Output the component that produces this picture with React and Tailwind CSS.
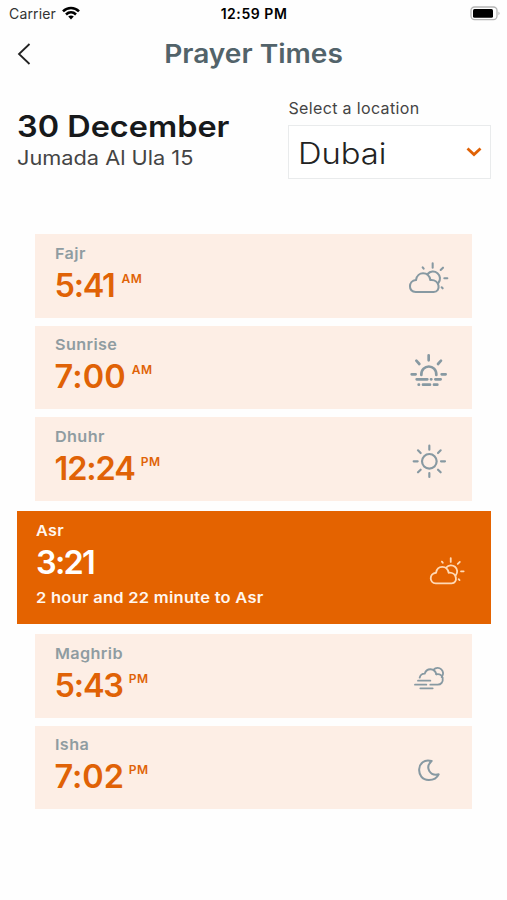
import { useState } from 'react'

function PartlyCloudyIcon({ className }) {
  return (
    <svg viewBox="54 108 126 102" className={className} fill="none" stroke="currentColor" strokeWidth="6.2" strokeLinecap="round" strokeLinejoin="round">
      <path d="M77 201C54 201 54 167 78 165C82 138 116 138 121 165C150 162 154 201 131 201Z" />
      <path d="M113 147A19 19 0 1 1 145 174" />
      <path d="M128 115V128M152 135L159 128M163 160H172M155 187L158 190M98 127L101 131" />
    </svg>
  )
}

function SunriseIcon({ className }) {
  return (
    <svg viewBox="60 384 114 102" className={className} fill="none" stroke="currentColor" strokeWidth="8" strokeLinecap="round">
      <path d="M94 450C93 416 140 416 139 450" />
      <path d="M116 391V406M79 407L88 417M153 407L144 417M65 448H77M155 448H167" />
      <path d="M80 463H112M123 463H124M136 463H152M86 479H87M99 479H120M132 479H142" />
    </svg>
  )
}

function SunIcon({ className }) {
  return (
    <svg viewBox="66 102 105 105" className={className} fill="none" stroke="currentColor" strokeWidth="6.5" strokeLinecap="round">
      <circle cx="118" cy="154" r="22" />
      <path d="M118 107V119M118 189V201M71 154H83M153 154H165M84 121L92 129M152 121L144 129M84 187L92 179M152 187L144 179" />
    </svg>
  )
}

function WindyCloudIcon({ className }) {
  return (
    <svg viewBox="69 171 99 75" className={className} fill="none" stroke="currentColor" strokeWidth="5.5" strokeLinecap="round">
      <path d="M89 206C91 198 97 194 104 194C110 176 134 176 139 196" />
      <path d="M131 182A16 16 0 1 1 155 204" />
      <path d="M139 196C150 194 157 199 158 207C160 219 153 227 143 227H121" />
      <path d="M84 215H121M75 227H109M91 238H128" />
    </svg>
  )
}

function MoonIcon({ className }) {
  return (
    <svg viewBox="81 444 72 72" className={className} fill="none" stroke="currentColor" strokeWidth="6" strokeLinejoin="round">
      <path d="M125 453C78 440 75 511 117 510C131 510 141 504 146 493C121 499 103 473 125 453Z" />
    </svg>
  )
}

const prayers = [
  { name: 'Fajr', time: '5:41', period: 'AM', icon: PartlyCloudyIcon, iconSize: 'w-[42px] h-[34px]', spacing: 'tracking-[-1.3px] mr-[7px]' },
  { name: 'Sunrise', time: '7:00', period: 'AM', icon: SunriseIcon, iconSize: 'w-[38px] h-[34px]', spacing: 'tracking-[0.1px] mr-[6px]' },
  { name: 'Dhuhr', time: '12:24', period: 'PM', icon: SunIcon, iconSize: 'w-[35px] h-[35px]', spacing: 'tracking-[-1.1px] mr-[6px]' },
  { name: 'Asr', time: '3:21', remaining: '2 hour and 22 minute to Asr', icon: PartlyCloudyIcon, iconSize: 'w-[37px] h-[30px]', spacing: 'tracking-[-1.8px]' },
  { name: 'Maghrib', time: '5:43', period: 'PM', icon: WindyCloudIcon, iconSize: 'w-[33px] h-[25px]', spacing: 'tracking-[-1.2px] mr-[6px]' },
  { name: 'Isha', time: '7:02', period: 'PM', icon: MoonIcon, iconSize: 'w-[24px] h-[24px]', spacing: 'tracking-[-0.1px] mr-[5px]' }
]

function StatusBar() {
  return (
    <div className="h-7 grid grid-cols-3 items-center pl-[9px] pr-[6px] text-black">
      <div className="flex items-center gap-[6px]">
        <span className="text-[14px] leading-7 tracking-[0.15px] text-[#333]">Carrier</span>
        <svg viewBox="0 0 18 14" className="w-[18px] h-[14px] -mt-[3px]" fill="none" stroke="currentColor" strokeWidth="2.6">
          <path d="M1 5.4C5.6 .9 12.4 .9 17 5.4" />
          <path d="M4 8.5C7 5.7 11 5.7 14 8.5" />
          <path d="M6.2 10.6C7.8 9.2 10.2 9.2 11.8 10.6L9 13.6Z" fill="currentColor" stroke="none" />
        </svg>
      </div>
      <span className="-ml-[2px] text-center text-[14px] leading-7 font-semibold tracking-[0.55px] whitespace-nowrap">12:59 PM</span>
      <svg viewBox="0 0 31 15" className="w-[31px] h-[15px] justify-self-end -mt-[2px]">
        <rect x="1" y="1" width="26" height="12.6" rx="3.5" fill="none" stroke="#b5b5b5" strokeWidth="1.3" />
        <rect x="3" y="3" width="20" height="8.8" rx="1.5" fill="#000" />
        <path d="M28.5 5.4Q30.6 7.3 28.5 9.2Z" fill="#aaa" />
      </svg>
    </div>
  )
}

function PrayerCard({ prayer, active, onSelect }) {
  const Icon = prayer.icon
  return (
    <button
      onClick={onSelect}
      className={`flex justify-between text-left ${
        active
          ? 'h-[113px] my-[2px] pl-[19.5px] pr-[22px] bg-[#e46300] text-white'
          : 'h-[83.7px] mx-[18.5px] pl-[19.5px] pr-[22px] bg-[#fdeee5] text-[#e06206]'
      }`}
    >
      <div className="pt-[9.5px] flex flex-col">
        <span className={`origin-left scale-x-[1.08] text-[15px] leading-5 font-semibold tracking-[0.35px] ${active ? 'text-[#fff6ee]' : 'text-[#8f9ca1]'}`}>
          {prayer.name}
        </span>
        <div className="flex items-start h-[44px]">
          <span className={`text-[32.5px] leading-[44px] font-semibold ${prayer.spacing}`}>{prayer.time}</span>
          {prayer.period && <span className="mt-[7px] text-[12px] leading-4 font-semibold tracking-[0.5px]">{prayer.period}</span>}
        </div>
        {prayer.remaining && (
          <span className="mt-[3px] origin-left scale-x-[1.1] text-[15px] leading-5 font-semibold tracking-[0.24px] text-[#fff6ee] whitespace-nowrap">{prayer.remaining}</span>
        )}
      </div>
      <div className={`w-[42px] h-full flex items-center justify-center ${active ? 'pt-[7px] text-[#ffd9b5]' : 'pt-[5px] text-[#8799a2]'}`}>
        <Icon className={prayer.iconSize} />
      </div>
    </button>
  )
}

function App() {
  const [selected, setSelected] = useState('Asr')

  return (
    <div className="w-[507px] h-[900px] overflow-hidden bg-[#fefefe] font-['Inter',sans-serif]">
      <StatusBar />

      <header className="h-[52px] grid grid-cols-[40px_1fr_40px] items-center">
        <button className="pl-[17px]" aria-label="Back">
          <svg viewBox="0 0 14 22" className="w-[14px] h-[22px]" fill="none" stroke="#222" strokeWidth="1.8">
            <path d="M12.5 1L2 11L12.5 21" />
          </svg>
        </button>
        <h1 className="scale-x-[1.08] text-center text-[26px] leading-[38px] pb-[1px] font-semibold text-[#52636a]">Prayer Times</h1>
      </header>

      <section className="h-[154px] px-[16.5px] pt-[18px] flex justify-between items-start">
        <div className="pt-[8px]">
          <h2 className="origin-left scale-x-[1.1] text-[29.5px] leading-[40px] font-semibold text-[#17191b]">30 December</h2>
          <p className="origin-left scale-x-[1.087] text-[20px] leading-6 text-[#444]">Jumada Al Ula 15</p>
        </div>
        <div className="w-[203px]">
          <p className="text-[16px] leading-[20px] tracking-[0.35px] pl-[1px] pb-[2px] text-[#444]">Select a location</p>
          <button className="mt-[5px] w-full h-[54px] pl-[9px] pr-[8px] flex items-center justify-between border border-[#e9ebec] bg-white">
            <span className="pt-[1px] origin-left scale-x-[1.11] text-[29.5px] leading-[44px] font-light text-[#222]">Dubai</span>
            <svg viewBox="0 0 16 10" className="w-[16px] h-[10px]" fill="none" stroke="#e06206" strokeWidth="2.8">
              <path d="M1.5 1.5L8 7.5L14.5 1.5" />
            </svg>
          </button>
        </div>
      </section>

      <main className="px-[16.5px] flex flex-col gap-[8px]">
        {prayers.map((prayer) => (
          <PrayerCard
            key={prayer.name}
            prayer={prayer}
            active={prayer.name === selected}
            onSelect={() => setSelected(prayer.name)}
          />
        ))}
      </main>
    </div>
  )
}

export default App
